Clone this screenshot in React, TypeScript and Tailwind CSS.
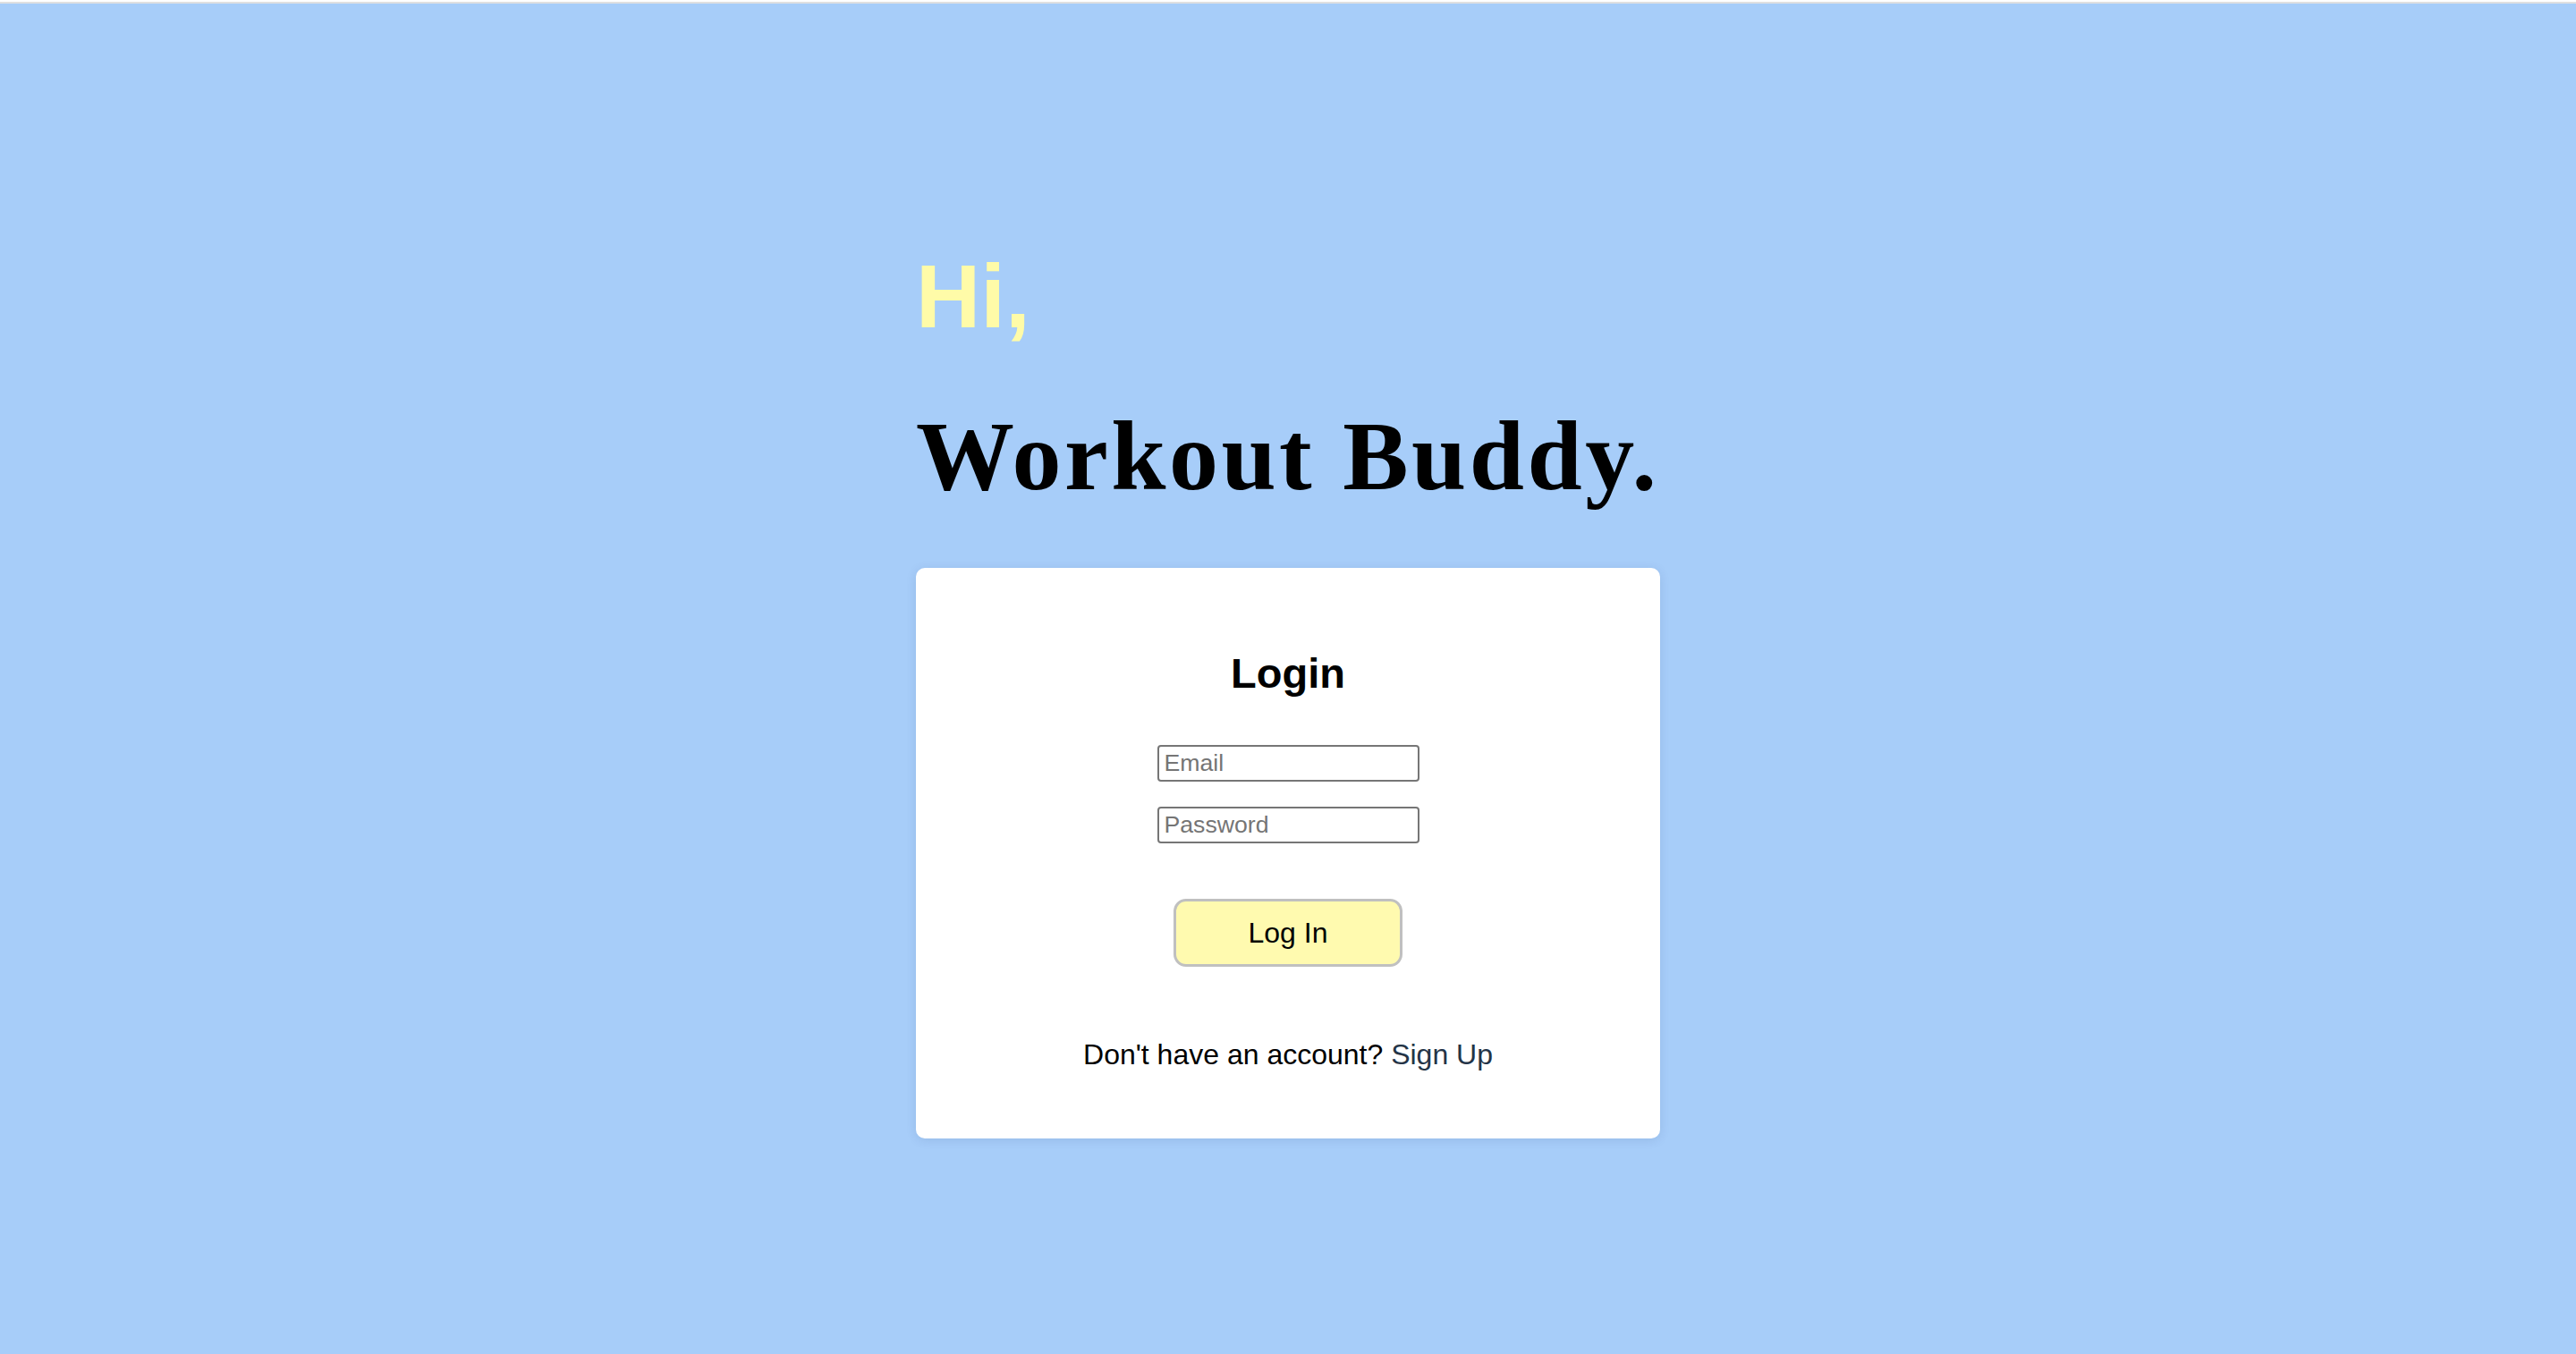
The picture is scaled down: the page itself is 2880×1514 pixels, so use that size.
import React from "react";

export default function App() {
  return (
    <div className="min-h-screen bg-[#a7cdf9] font-['Liberation_Sans',Arial,sans-serif]">
      <div className="h-[2px] bg-white" />
      <div className="h-[2px] bg-[#e0e0e0]" />
      <div className="mx-auto w-[832px] pt-[277px] pb-[200px]">
        <h2 className="text-[100px] leading-none font-bold text-[#fffba8]">Hi,</h2>
        <h1 className="mt-[74px] text-[110px] leading-none font-bold text-black font-['Liberation_Serif','Times_New_Roman',serif] tracking-[3.5px] whitespace-nowrap">
          Workout Buddy.
        </h1>
        <div className="mt-[70px] bg-white rounded-[10px] shadow-[0_2px_12px_rgba(30,60,110,0.12)] pt-[94px] pb-[78px] flex flex-col items-center">
          <h3 className="text-[47px] leading-none font-bold text-black">Login</h3>
          <input
            type="email"
            placeholder="Email"
            className="mt-[57px] w-[293px] h-[41px] border-2 border-[#767676] rounded-[4px] px-[6px] text-[26.67px] placeholder:text-[#757575] bg-white outline-none"
          />
          <input
            type="password"
            placeholder="Password"
            className="mt-[28px] w-[293px] h-[41px] border-2 border-[#767676] rounded-[4px] px-[6px] text-[26.67px] placeholder:text-[#757575] bg-white outline-none"
          />
          <button className="mt-[62px] w-[256px] h-[76px] bg-[#fffaaf] border-[3px] border-[#c0c0c0] rounded-[14px] text-[32px] leading-none text-black">
            Log In
          </button>
          <p className="mt-[82px] text-[32px] leading-none text-black">
            Don't have an account? <a className="text-[#243447]">Sign Up</a>
          </p>
        </div>
      </div>
    </div>
  );
}
